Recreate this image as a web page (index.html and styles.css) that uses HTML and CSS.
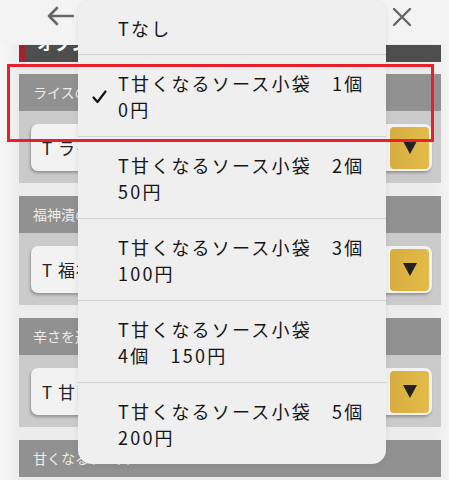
FILE: index.html
```html
<!DOCTYPE html>
<html lang="ja">
<head>
  <meta charset="UTF-8" />
  <meta name="viewport" content="width=device-width, initial-scale=1.0"/>
  <title>オプション選択</title>
  <link rel="stylesheet" href="styles.css">
</head>
<body>
  <div class="topbar">
    <svg class="icon-back" width="28" height="20" viewBox="0 0 28 20">
      <path d="M27 10H3M11 2L3 10L11 18" fill="none" stroke="#666" stroke-width="2.6" stroke-linecap="round" stroke-linejoin="round"/>
    </svg>
    <svg class="icon-close" width="20" height="20" viewBox="0 0 20 20">
      <path d="M2 2L18 18M18 2L2 18" fill="none" stroke="#666" stroke-width="2.4" stroke-linecap="round"/>
    </svg>
  </div>

  <div class="page">
    <div class="opt-head"><span>オプション</span></div>

    <div class="sec">
      <div class="sec-head">ライスの量</div>
      <div class="sec-body">
        <div class="select">
          <span class="select-text">T ライス普通</span>
          <span class="select-btn"><i class="tri"></i></span>
        </div>
      </div>
    </div>

    <div class="sec">
      <div class="sec-head">福神漬の量</div>
      <div class="sec-body">
        <div class="select">
          <span class="select-text">T 福神漬なし</span>
          <span class="select-btn"><i class="tri"></i></span>
        </div>
      </div>
    </div>

    <div class="sec">
      <div class="sec-head">辛さを選ぶ</div>
      <div class="sec-body">
        <div class="select">
          <span class="select-text">T 甘口</span>
          <span class="select-btn"><i class="tri"></i></span>
        </div>
      </div>
    </div>

    <div class="sec">
      <div class="sec-head">甘くなるソース</div>
    </div>
  </div>

  <ul class="menu">
    <li class="menu-item">Tなし</li>
    <li class="menu-item checked">
      <svg class="check" width="15" height="14" viewBox="0 0 15 14">
        <path d="M1.5 7.5L5.5 12L13.5 1.5" fill="none" stroke="#111" stroke-width="2.2" stroke-linecap="round" stroke-linejoin="round"/>
      </svg>
      T甘くなるソース小袋　1個<br>0円
    </li>
    <li class="menu-item">T甘くなるソース小袋　2個<br>50円</li>
    <li class="menu-item">T甘くなるソース小袋　3個<br>100円</li>
    <li class="menu-item">T甘くなるソース小袋<br>4個　150円</li>
    <li class="menu-item">T甘くなるソース小袋　5個<br>200円</li>
  </ul>

  <div class="mark"></div>
</body>
</html>
```

FILE: styles.css
```css
:root {
  --head: #919191;
  --body: #cbcbcb;
  --text: #161616;
}
body {
  margin: 0;
  height: 480px;
  overflow: hidden;
  background: linear-gradient(90deg, #f7f7f7 0, #ececec 19px, #ececec 430px, #f3f3f3 100%);
  font-family: "Noto Sans CJK JP", "Noto Sans", sans-serif;
  color: var(--text);
}
.topbar {
  height: 44px;
  display: flex;
  justify-content: space-between;
  align-items: flex-start;
  padding: 6px 37px 0 46px;
  box-sizing: border-box;
  background: #f3f3f3;
  position: relative;
  z-index: 1;
}
.icon-close {
  margin-top: 1px;
}
.page {
  margin: 0 8px 0 19px;
}
.opt-head {
  height: 17px;
  margin-top: 1px;
  overflow: hidden;
  background: #4e4e4e;
  border-left: 6px solid #a4222c;
  color: #fff;
  font-weight: bold;
  font-size: 17px;
  padding-left: 12px;
}
.opt-head span {
  display: block;
  line-height: 24px;
  margin-top: -14px;
}
.sec {
  margin-top: 12px;
}
.sec + .sec {
  margin-top: 13px;
}
.sec-head {
  height: 37px;
  line-height: 37px;
  background: var(--head);
  color: #ededed;
  font-size: 14px;
  padding-left: 14px;
}
.sec-body {
  background: var(--body);
  padding: 13px 9px 12px 12px;
  height: 47px;
}
.select {
  height: 47px;
  box-sizing: border-box;
  background: #f2f2f2;
  border-radius: 7px;
  box-shadow: -1px 2px 3px rgba(0,0,0,0.28);
  display: flex;
  align-items: center;
  justify-content: space-between;
  padding: 2px 3px 2px 11px;
}
.select-text {
  font-size: 17px;
  color: #222;
  letter-spacing: 1px;
}
.select-btn {
  width: 39px;
  height: 42px;
  border-radius: 4px;
  background: linear-gradient(90deg, #d6ad3e, #e3bb4b);
  display: flex;
  align-items: center;
  justify-content: center;
}
.tri {
  width: 0;
  height: 0;
  border-left: 7.5px solid transparent;
  border-right: 7.5px solid transparent;
  border-top: 13px solid #222;
}
.menu {
  position: absolute;
  left: 78px;
  top: 0;
  width: 308px;
  margin: 0;
  padding: 0;
  list-style: none;
  background: #efefef;
  border-radius: 14px;
  box-shadow: 0 1px 6px rgba(0,0,0,0.08);
  z-index: 2;
}
.menu-item {
  position: relative;
  padding: 15px 6px 14px 40px;
  border-top: 1px solid #d0d0d0;
  font-size: 18px;
  line-height: 26px;
  letter-spacing: 2.2px;
  color: var(--text);
}
.menu-item:first-child {
  border-top: none;
  padding: 15px 6px 13px 40px;
}
.check {
  position: absolute;
  left: 14px;
  top: 35px;
}
.mark {
  position: absolute;
  left: 7px;
  top: 64px;
  width: 427px;
  height: 78px;
  box-sizing: border-box;
  border: 3px solid #e8202b;
  z-index: 3;
}
```
